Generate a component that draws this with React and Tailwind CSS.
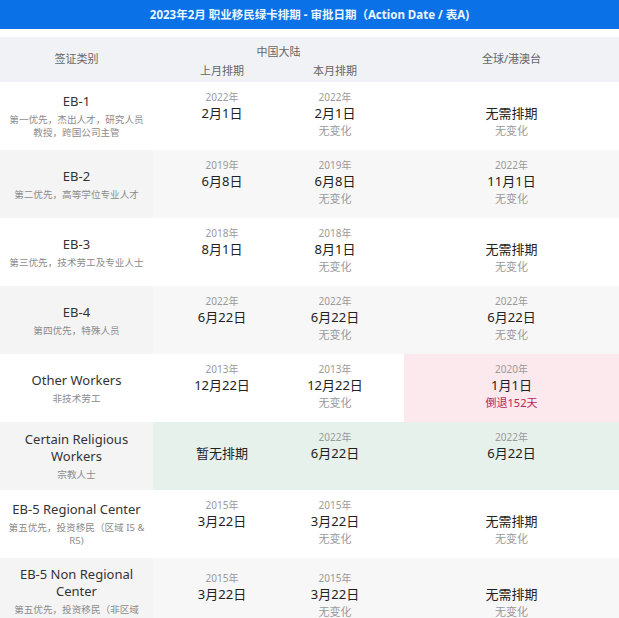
import React from "react";

const rows = [
  {
    label: ["EB-1"],
    desc: ["第一优先，杰出人才，研究人员", "教授，跨国公司主管"],
    last: { y: "2022年", d: "2月1日" },
    cur: { y: "2022年", d: "2月1日", c: "无变化" },
    glob: { d: "无需排期", c: "无变化" },
  },
  {
    label: ["EB-2"],
    desc: ["第二优先，高等学位专业人才"],
    last: { y: "2019年", d: "6月8日" },
    cur: { y: "2019年", d: "6月8日", c: "无变化" },
    glob: { y: "2022年", d: "11月1日", c: "无变化" },
  },
  {
    label: ["EB-3"],
    desc: ["第三优先，技术劳工及专业人士"],
    last: { y: "2018年", d: "8月1日" },
    cur: { y: "2018年", d: "8月1日", c: "无变化" },
    glob: { d: "无需排期", c: "无变化" },
  },
  {
    label: ["EB-4"],
    desc: ["第四优先，特殊人员"],
    last: { y: "2022年", d: "6月22日" },
    cur: { y: "2022年", d: "6月22日", c: "无变化" },
    glob: { y: "2022年", d: "6月22日", c: "无变化" },
  },
  {
    label: ["Other Workers"],
    desc: ["非技术劳工"],
    last: { y: "2013年", d: "12月22日" },
    cur: { y: "2013年", d: "12月22日", c: "无变化" },
    glob: { y: "2020年", d: "1月1日", c: "倒退152天", red: true },
    pink: true,
  },
  {
    label: ["Certain Religious", "Workers"],
    desc: ["宗教人士"],
    last: { d: "暂无排期" },
    cur: { y: "2022年", d: "6月22日" },
    glob: { y: "2022年", d: "6月22日" },
    green: true,
  },
  {
    label: ["EB-5 Regional Center"],
    desc: ["第五优先，投资移民（区域 I5 &", "R5)"],
    last: { y: "2015年", d: "3月22日" },
    cur: { y: "2015年", d: "3月22日", c: "无变化" },
    glob: { d: "无需排期", c: "无变化" },
  },
  {
    label: ["EB-5 Non Regional", "Center"],
    desc: ["第五优先，投资移民（非区域", "C5 & T5)"],
    last: { y: "2015年", d: "3月22日" },
    cur: { y: "2015年", d: "3月22日", c: "无变化" },
    glob: { d: "无需排期", c: "无变化" },
  },
];

function Data({ v }) {
  return (
    <div className="flex flex-col items-center pb-[4px]">
      <div className="h-[16px] leading-[16px] text-[10px] text-[#9a9a9a] whitespace-nowrap">
        {v.y || ""}
      </div>
      <div className="h-[17px] leading-[17px] text-[13px] text-[#222] whitespace-nowrap">
        {v.d || ""}
      </div>
      <div
        className={
          v.red
            ? "h-[18px] leading-[18px] text-[11px] text-[#b8245a] whitespace-nowrap"
            : "h-[18px] leading-[18px] text-[11px] text-[#9a9a9a] whitespace-nowrap"
        }
      >
        {v.c || ""}
      </div>
    </div>
  );
}

export default function App() {
  return (
    <div className="w-[619px] h-[618px] overflow-hidden bg-white font-['Noto_Sans','Noto_Sans_CJK_SC',sans-serif]">
      <div className="h-[29px] bg-[#0a71e6] flex items-center justify-center text-[11.5px] font-bold text-[#eaf6ff] whitespace-nowrap">
        2023年2月 职业移民绿卡排期 - 审批日期（Action Date / 表A)
      </div>
      <div className="h-[8px] bg-white" />
      <div className="grid grid-cols-[153px_125px_126px_1fr] h-[45px] bg-[#f1f2f5] text-[11px] text-[#666]">
        <div className="flex items-center justify-center">签证类别</div>
        <div className="col-span-2 flex flex-col pt-[7px]">
          <div className="h-[16px] leading-[16px] text-center">中国大陆</div>
          <div className="grid grid-cols-[125px_126px] mt-[3px]">
            <div className="h-[16px] leading-[16px] text-center pl-[13px]">上月排期</div>
            <div className="h-[16px] leading-[16px] text-center pr-[12px]">本月排期</div>
          </div>
        </div>
        <div className="flex items-center justify-center">全球/港澳台</div>
      </div>
      {rows.map((r, i) => {
        const grey = i % 2 === 1;
        const labelBg = grey ? "bg-[#f4f4f4]" : "bg-white";
        const dataBg = r.green ? "bg-[#e5f1ea]" : grey ? "bg-[#f7f7f7]" : "bg-white";
        const globBg = r.pink ? "bg-[#fce9ed]" : dataBg;
        return (
          <div key={i} className="grid grid-cols-[153px_125px_126px_1fr] min-h-[68px]">
            <div className={`${labelBg} flex flex-col items-center justify-center text-center px-[4px] py-[8px]`}>
              {r.label.map((l, k) => (
                <div key={k} className="text-[13px] leading-[17px] text-[#333] whitespace-nowrap">
                  {l}
                </div>
              ))}
              <div className="mt-[3px]">
                {r.desc.map((d, k) => (
                  <div key={k} className="text-[9.6px] leading-[13px] text-[#8c8c8c] whitespace-nowrap">
                    {d}
                  </div>
                ))}
              </div>
            </div>
            <div className={`${dataBg} flex items-center justify-center pl-[13px]`}>
              <Data v={r.last} />
            </div>
            <div className={`${dataBg} flex items-center justify-center pr-[12px]`}>
              <Data v={r.cur} />
            </div>
            <div className={`${globBg} flex items-center justify-center`}>
              <Data v={r.glob} />
            </div>
          </div>
        );
      })}
    </div>
  );
}
